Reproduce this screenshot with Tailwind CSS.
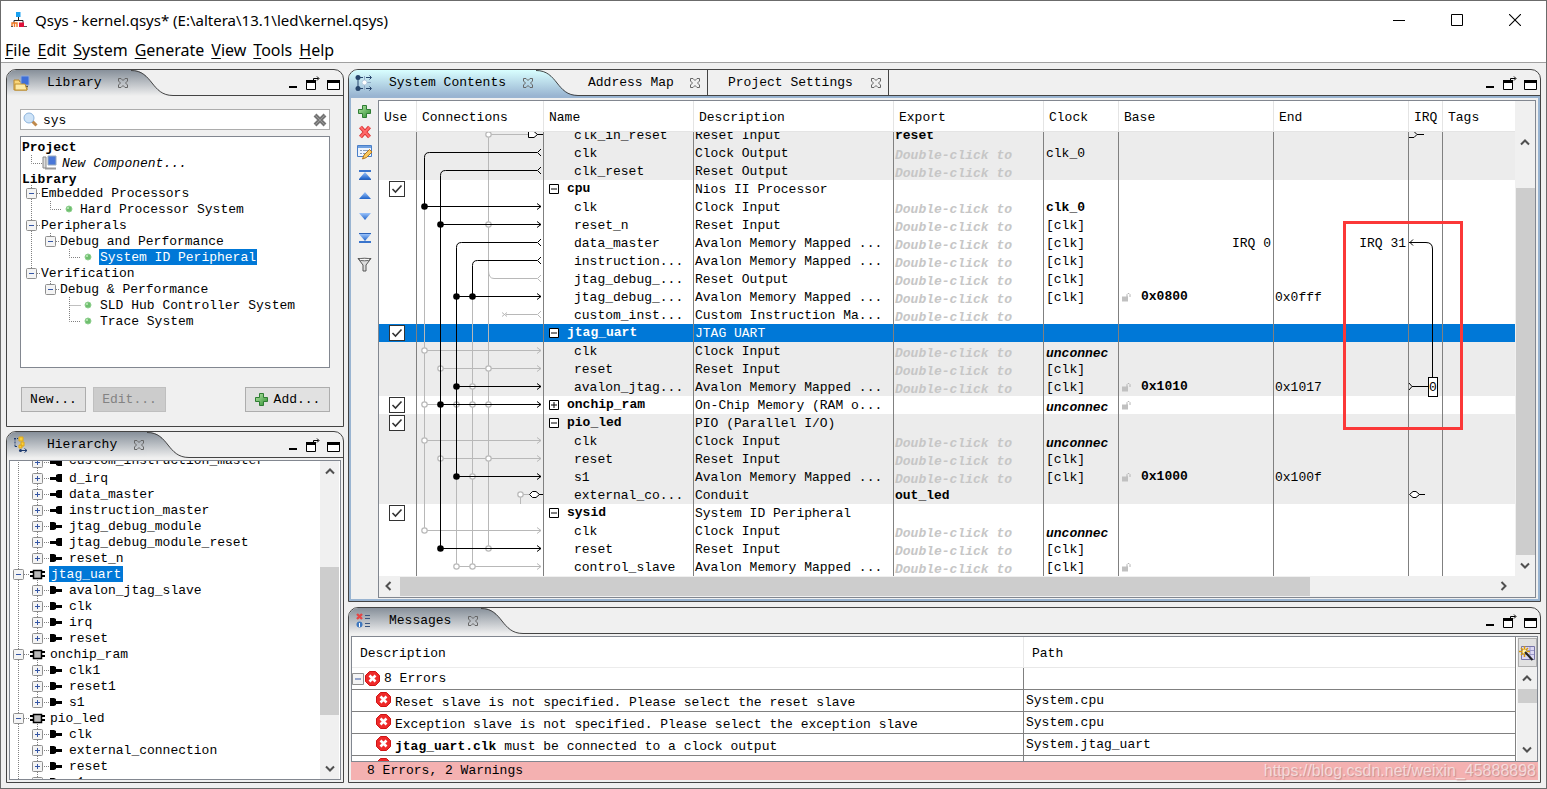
<!DOCTYPE html>
<html lang="en">
<head>
<meta charset="utf-8">
<title>Qsys - kernel.qsys*</title>
<script src="https://cdn.jsdelivr.net/npm/@tailwindcss/browser@4"></script>
</head>
<body class="h-screen overflow-hidden bg-[#f0f0f0] text-black text-[13px] leading-4 font-['Liberation_Mono',monospace]">
<svg class="absolute h-0 w-0" aria-hidden="true">
  <defs>
    <linearGradient id="gGray" x1="0" y1="0" x2="0" y2="1"><stop offset="0" stop-color="#87909a"/><stop offset="1" stop-color="#f0f0f0"/></linearGradient>
    <linearGradient id="gBlue" x1="0" y1="0" x2="0" y2="1"><stop offset="0" stop-color="#d9ffff"/><stop offset="1" stop-color="#99b4d1"/></linearGradient>
    <linearGradient id="gTri" x1="0" y1="0" x2="0" y2="1"><stop offset="0" stop-color="#9cc4fb"/><stop offset="1" stop-color="#1f63c9"/></linearGradient>
    <linearGradient id="gPlus" x1="0" y1="0" x2="1" y2="1"><stop offset="0" stop-color="#b5e6a8"/><stop offset="1" stop-color="#2f8f2f"/></linearGradient>
    <symbol id="close" viewBox="0 0 12 12"><path d="M1.5 1.5H4L6 3.5 8 1.5H10.5V4L8.500 6 10.500 8V10.500H8L6 8.500 4 10.500H1.500V8L3.500 6 1.500 4Z" fill="none" stroke="#666" stroke-width="1"/></symbol>
    <symbol id="plus" viewBox="0 0 13 13"><path d="M4.500 .5H8.500V4.500H12.500V8.500H8.500V12.500H4.500V8.500H.5V4.500H4.500Z" fill="url(#gPlus)" stroke="#2f7d33"/></symbol>
    <symbol id="err" viewBox="0 0 15 15"><path d="M4.500 .5H10.500L14.500 4.500V10.500L10.500 14.500H4.500L.5 10.500V4.500Z" fill="#ee2a2a" stroke="#d01414"/><path d="M4.500 4.500L10.500 10.500M10.500 4.500L4.500 10.500" stroke="#fff" stroke-width="2.600"/></symbol>
    <symbol id="curveGray" viewBox="0 0 42 26"><path d="M0 0C22 0 20 25 42 25V26H0Z" fill="url(#gGray)"/><path d="M0 .5C22 .5 20 25.500 42 25.500" fill="none" stroke="#444"/></symbol>
    <symbol id="curveBlue" viewBox="0 0 42 26"><path d="M0 0C22 0 20 25 42 25V26H0Z" fill="url(#gBlue)"/><path d="M0 .5C22 .5 20 25.500 42 25.500" fill="none" stroke="#444"/></symbol>
    <symbol id="min" viewBox="0 0 10 14"><path d="M1 11H9" stroke="#000" stroke-width="2"/></symbol>
    <symbol id="float" viewBox="0 0 15 14"><path d="M1.500 4.500H10.500V13.500H1.500Z" fill="#fff" stroke="#000"/><path d="M1 5.500H11" stroke="#000" stroke-width="3"/><path d="M8.500 4V2.500H13.500M12 .5L14 2.500L12 4.500" fill="none" stroke="#000"/></symbol>
    <symbol id="max" viewBox="0 0 13 14"><path d="M.5 4.500H12.500V13.500H.5Z" fill="#fff" stroke="#000"/><path d="M0 5.500H13" stroke="#000" stroke-width="3"/></symbol>
    <symbol id="up" viewBox="0 0 10 7"><path d="M1 5.500L5 1.500L9 5.500" fill="none" stroke="#505050" stroke-width="2"/></symbol>
    <symbol id="down" viewBox="0 0 10 7"><path d="M1 1.500L5 5.500L9 1.500" fill="none" stroke="#505050" stroke-width="2"/></symbol>
    <symbol id="left" viewBox="0 0 7 10"><path d="M5.500 1L1.500 5L5.500 9" fill="none" stroke="#505050" stroke-width="2"/></symbol>
    <symbol id="right" viewBox="0 0 7 10"><path d="M1.500 1L5.500 5L1.500 9" fill="none" stroke="#505050" stroke-width="2"/></symbol>
    <symbol id="lock" viewBox="0 0 9 9"><path d="M0 3.500H6V8.500H0Z" fill="#c0c0c0"/><path d="M5 4V1.500L6 .5H7L8 1.500V4" fill="none" stroke="#b4b4b4"/></symbol>
  </defs>
</svg>

<div class="flex h-full flex-col border border-[#6b6b6b]">
  <header class="bg-white font-['Noto_Sans',sans-serif] text-[15px]">
    <div class="flex h-[37px] items-center pr-0.5 pl-2.5">
      <svg class="mr-2 h-4 w-4" viewBox="0 0 16 16" aria-hidden="true"><path d="M5 0H9.500V5H5Z" fill="#1aa0f0"/><path d="M7.500 5V8M3 11V8.500H12V11" fill="none" stroke="#222"/><path d="M1 15V11H6V15M3.500 11V15" fill="none" stroke="#ee7722" stroke-width="1.400"/><path d="M8 10.500H13V15H8Z" fill="#e0103a"/><path d="M0 14.500H2M13 14.500H16" stroke="#555"/></svg>
      <h1 class="flex-1 whitespace-nowrap">Qsys - kernel.qsys* (E:\altera\13.1\led\kernel.qsys)</h1>
      <button class="grid h-full w-[58px] place-items-center" aria-label="Minimize"><svg class="h-3 w-3.5" viewBox="0 0 14 12"><path d="M1 6.500H13" stroke="#000"/></svg></button>
      <button class="grid h-full w-[58px] place-items-center" aria-label="Maximize"><svg class="h-3 w-3" viewBox="0 0 12 12"><path d="M.5 .5H11.500V11.500H.5Z" fill="none" stroke="#000"/></svg></button>
      <button class="grid h-full w-[58px] place-items-center" aria-label="Close"><svg class="h-3 w-3" viewBox="0 0 12 12"><path d="M0 0L12 12M12 0L0 12" stroke="#000" stroke-width="1.100"/></svg></button>
    </div>
    <nav class="flex h-[25px] items-center gap-[7px] border-b border-[#a0a0a0] pl-1 text-base leading-5">
      <button><u class="underline-offset-2">F</u>ile</button>
      <button><u class="underline-offset-2">E</u>dit</button>
      <button><u class="underline-offset-2">S</u>ystem</button>
      <button><u class="underline-offset-2">G</u>enerate</button>
      <button><u class="underline-offset-2">V</u>iew</button>
      <button><u class="underline-offset-2">T</u>ools</button>
      <button><u class="underline-offset-2">H</u>elp</button>
    </nav>
  </header>

  <main class="flex min-h-0 flex-1 gap-1 px-[5px] pt-[6px] pb-[5px]">
    <div class="flex w-[338px] shrink-0 flex-col gap-1">

      <section class="flex h-[358px] shrink-0 flex-col rounded-t-[10px] border border-[#444]">
        <div class="flex h-[26px] shrink-0 overflow-hidden rounded-t-[9px]">
          <div class="flex w-[124px] items-center bg-linear-to-b from-[#87909a] to-[#f0f0f0] pr-0.5 pl-[6px]">
            <svg class="mr-4 h-[18px] w-[18px]" viewBox="0 0 18 18" aria-hidden="true"><path d="M1 6H6L7 8H14V16H1Z" fill="#f9d67a" stroke="#b8862b"/><path d="M8 2H16V11H8Z" fill="#3f6fd8" stroke="#8ea9d8"/><path d="M10 12.500H15" stroke="#555"/><path d="M2 10H12L14 16H2Z" fill="#fde9a6" stroke="#c0902f"/></svg>
            <h2>Library</h2>
            <button class="ml-auto" aria-label="Close Library"><svg class="h-3 w-3"><use href="#close"/></svg></button>
          </div>
          <svg class="h-[26px] w-[42px]" aria-hidden="true"><use href="#curveGray"/></svg>
          <div class="flex flex-1 items-center justify-end gap-[7px] border-b border-[#444] pr-[3px]">
            <button aria-label="Minimize panel"><svg class="h-3.5 w-2.5"><use href="#min"/></svg></button>
            <button aria-label="Detach panel"><svg class="h-3.5 w-[15px]"><use href="#float"/></svg></button>
            <button aria-label="Maximize panel"><svg class="h-3.5 w-[13px]"><use href="#max"/></svg></button>
          </div>
        </div>
        <div class="flex min-h-0 flex-1 flex-col px-[13px] pt-[13px] pb-[14px]">
          <label class="flex h-[21px] items-center border border-[#acacac] bg-white px-0.5">
            <svg class="h-4 w-4" viewBox="0 0 16 16" aria-hidden="true"><path d="M9 9L13.500 13.500" stroke="#c08a4c" stroke-width="3"/><circle cx="6" cy="6" r="5" fill="#cfe4f8" stroke="#8db4dd"/></svg>
            <input type="text" value="sys" aria-label="Search library" class="ml-1 h-[18px] w-0 flex-1 pt-0.5 outline-none">
            <button aria-label="Clear search"><svg class="h-3.5 w-3.5" viewBox="0 0 14 14"><path d="M2 2L12 12M12 2L2 12" stroke="#757575" stroke-width="4"/><path d="M2.500 2.500L11.500 11.500M11.500 2.500L2.500 11.500" stroke="#999"/></svg></button>
          </label>
          <div id="lib" role="tree" class="mt-[6px] min-h-0 flex-1 overflow-hidden border border-[#828790] bg-white pt-0.5 leading-[18px]"></div>
          <div class="mt-[19px] flex h-[25px] shrink-0 gap-[7px] pl-px">
            <button class="w-[65px] border border-[#adadad] bg-[#e1e1e1]">New...</button>
            <button disabled class="w-[73px] border border-[#bfbfbf] bg-[#ccc] text-[#838383]">Edit...</button>
            <button class="ml-auto flex w-[85px] items-center justify-center gap-1.5 border border-[#adadad] bg-[#e1e1e1]"><svg class="h-[13px] w-[13px]"><use href="#plus"/></svg>Add...</button>
          </div>
        </div>
      </section>

      <section class="flex min-h-0 flex-1 flex-col rounded-t-[10px] border border-[#444]">
        <div class="flex h-[26px] shrink-0 overflow-hidden rounded-t-[9px]">
          <div class="flex w-[140px] items-center bg-linear-to-b from-[#87909a] to-[#f0f0f0] pr-0.5 pl-[6px]">
            <svg class="mr-4 h-[18px] w-[18px]" viewBox="0 0 18 18" aria-hidden="true"><path d="M2 2.500V10.500M1 2.500H5M2 10.500H5" fill="none" stroke="#1e3b6f" stroke-dasharray="2 1"/><path d="M6 1H10V5H6ZM8 6H11V10H8ZM6 9H9V12H6Z" fill="#f8cf3c" stroke="#e0a818"/><path d="M7 14.500H14" stroke="#1e3b6f"/><circle cx="7.500" cy="14.500" r="1.500" fill="#1e3b6f"/><path d="M11.500 12.500L14 14.500L11.500 16.500" fill="none" stroke="#1e3b6f"/></svg>
            <h2>Hierarchy</h2>
            <button class="ml-auto" aria-label="Close Hierarchy"><svg class="h-3 w-3"><use href="#close"/></svg></button>
          </div>
          <svg class="h-[26px] w-[42px]" aria-hidden="true"><use href="#curveGray"/></svg>
          <div class="flex flex-1 items-center justify-end gap-[7px] border-b border-[#444] pr-[3px]">
            <button aria-label="Minimize panel"><svg class="h-3.5 w-2.5"><use href="#min"/></svg></button>
            <button aria-label="Detach panel"><svg class="h-3.5 w-[15px]"><use href="#float"/></svg></button>
            <button aria-label="Maximize panel"><svg class="h-3.5 w-[13px]"><use href="#max"/></svg></button>
          </div>
        </div>
        <div class="mx-0.5 mt-0.5 mb-0.5 flex min-h-0 flex-1 border border-[#828790] bg-white">
          <div id="hier" role="tree" class="flex min-h-0 flex-1 flex-col overflow-hidden leading-[18px]"></div>
          <div class="mr-px flex w-[19px] flex-col items-center bg-[#f0f0f0] py-[7px]">
            <svg class="h-[7px] w-2.5 shrink-0"><use href="#up"/></svg>
            <div class="mt-[92px] h-[148px] w-full bg-[#cdcdcd]"></div>
            <svg class="mt-auto h-[7px] w-2.5 shrink-0"><use href="#down"/></svg>
          </div>
        </div>
      </section>
    </div>

    <div class="flex min-w-0 flex-1 flex-col gap-[5px]">
      <section class="flex min-h-0 flex-1 flex-col rounded-t-[10px] border border-[#444]">
        <div class="flex h-[26px] shrink-0 overflow-hidden rounded-t-[9px]">
          <div class="flex w-[187px] items-center bg-linear-to-b from-[#d9ffff] to-[#99b4d1] pr-0.5 pl-[6px]">
            <svg class="mr-4 h-[18px] w-[18px] shrink-0" viewBox="0 0 18 18" aria-hidden="true"><path d="M3 3V15M3 3.500H8M3 14.500H8M11 3.500H16M11 14.500H16" stroke="#27456b"/><path d="M9.500 2V16M9 8.500H16" stroke="#8fa9c4"/><circle cx="3" cy="3.500" r="2.500" fill="#27456b"/><circle cx="3" cy="14.500" r="2.500" fill="#27456b"/><circle cx="9.500" cy="8.500" r="2.500" fill="#fff" stroke="#b5cbe0"/><path d="M14.500 1.500L16.500 3.500L14.500 5.500M14.500 12.500L16.500 14.500L14.500 16.500" fill="none" stroke="#27456b"/></svg>
            <h2 class="whitespace-nowrap">System Contents</h2>
            <button class="ml-auto" aria-label="Close System Contents"><svg class="h-3 w-3"><use href="#close"/></svg></button>
          </div>
          <svg class="h-[26px] w-[42px]" aria-hidden="true"><use href="#curveBlue"/></svg>
          <div class="flex w-[130px] items-center border-r border-b border-[#444] pr-1.5 pl-2.5">
            <h2 class="whitespace-nowrap">Address Map</h2>
            <button class="ml-auto" aria-label="Close Address Map"><svg class="h-3 w-3"><use href="#close"/></svg></button>
          </div>
          <div class="flex w-[181px] items-center border-r border-b border-[#444] pr-1.5 pl-5">
            <h2 class="whitespace-nowrap">Project Settings</h2>
            <button class="ml-auto" aria-label="Close Project Settings"><svg class="h-3 w-3"><use href="#close"/></svg></button>
          </div>
          <div class="flex flex-1 items-center justify-end gap-[7px] border-b border-[#444] pr-[3px]">
            <button aria-label="Minimize panel"><svg class="h-3.5 w-2.5"><use href="#min"/></svg></button>
            <button aria-label="Detach panel"><svg class="h-3.5 w-[15px]"><use href="#float"/></svg></button>
            <button aria-label="Maximize panel"><svg class="h-3.5 w-[13px]"><use href="#max"/></svg></button>
          </div>
        </div>
        <div class="flex min-h-0 flex-1 border-2 border-[#99b4d1] pt-[2px] pr-[2px] pb-px">
          <div class="flex w-[27px] shrink-0 flex-col items-center gap-[9px] pt-[5px]" role="toolbar">
            <button aria-label="Add"><svg class="h-[13px] w-[13px]"><use href="#plus"/></svg></button>
            <button class="-mt-0.5" aria-label="Remove"><svg class="h-3.5 w-3.5" viewBox="0 0 14 14"><path d="M2.500 2L11.500 12M11.500 2L2.500 12" stroke="#d93131" stroke-width="4"/><path d="M2.500 2L11.500 12M11.500 2L2.500 12" stroke="#ff6a6a" stroke-width="2"/></svg></button>
            <button class="-mt-1" aria-label="Edit"><svg class="h-4 w-4" viewBox="0 0 16 16"><path d="M.5 1.500H14.500V12.500H.5Z" fill="#eef4fd" stroke="#4a7fc8"/><path d="M1 3H14" stroke="#6fa0e0" stroke-width="2"/><path d="M3 6.500H5M3 9.500H5M6 6.500H11M6 9.500H9" stroke="#8a9bb5"/><path d="M5.500 15L7 11L12.500 5.500L15 8L9.500 13.500Z" fill="#f7c860" stroke="#b5761c"/></svg></button>
            <button aria-label="Move to top"><svg class="h-3 w-3.5" viewBox="0 0 14 12"><path d="M1 2H13" stroke="#3a74cc" stroke-width="2"/><path d="M7 3L13 10H1Z" fill="url(#gTri)"/><path d="M1 10.500H13" stroke="#2b62b8"/></svg></button>
            <button aria-label="Move up"><svg class="h-3 w-3.5" viewBox="0 0 14 12"><path d="M7 2L13 9H1Z" fill="url(#gTri)"/></svg></button>
            <button aria-label="Move down"><svg class="h-3 w-3.5" viewBox="0 0 14 12"><path d="M7 9L13 2H1Z" fill="url(#gTri)"/></svg></button>
            <button aria-label="Move to bottom"><svg class="h-3 w-3.5" viewBox="0 0 14 12"><path d="M1 1.500H13" stroke="#2b62b8"/><path d="M7 9L13 2H1Z" fill="url(#gTri)"/><path d="M1 10H13" stroke="#3a74cc" stroke-width="2"/></svg></button>
            <button class="mt-1" aria-label="Filter"><svg class="h-[15px] w-[15px]" viewBox="0 0 15 15"><path d="M1 1.500H14L9 8V14H6V8Z" fill="#ddd" stroke="#555"/><ellipse cx="7.500" cy="2.500" rx="5.500" ry="1.300" fill="#f6f6f6" stroke="#666"/></svg></button>
          </div>
          <div class="flex min-w-0 flex-1 flex-col border border-[#828790]">
            <div class="flex min-h-0 flex-1">
              <div class="relative min-w-0 flex-1 overflow-hidden bg-white">
                <table class="w-full table-fixed border-separate border-spacing-0 whitespace-nowrap">
                  <colgroup><col class="w-[37px]"><col class="w-[127px]"><col class="w-[150px]"><col class="w-[200px]"><col class="w-[150px]"><col class="w-[75px]"><col class="w-[155px]"><col class="w-[135px]"><col class="w-[34px]"><col></colgroup>
                  <thead><tr id="head"></tr></thead>
                  <tbody id="rows"></tbody>
                </table>
                <svg id="wires" class="absolute top-[31px] left-[37px] h-[444px] w-[127px]" viewBox="416 132 127 444" fill="none" aria-hidden="true"></svg>
                <svg class="absolute top-[31px] left-[1029px] h-[444px] w-[35px]" viewBox="1408 132 35 444" fill="none" stroke="#000" aria-hidden="true">
                  <path d="M1409 137.500H1414L1417 134.500L1414 131.500M1417 134.500H1424"/>
                  <path d="M1409 242.500H1426Q1432.500 242.500 1432.500 249V378M1413 239.500L1410 242.500L1413 245.500"/>
                  <path d="M1409 383L1412 386.500L1409 390M1412 386.500H1428"/>
                  <rect x="1428.500" y="377.500" width="9" height="19" fill="#fff"/>
                  <text x="1429" y="391" fill="#000" stroke="none" class="text-[13px]">0</text>
                  <path d="M1409.500 494.500L1413 491.500H1416L1419.500 494.500L1416 497.500H1413ZM1419 494.500H1425" fill="#fff"/>
                </svg>
                <div class="absolute top-[120px] left-[964px] h-[209px] w-[120px] border-3 border-[#fb3838]"></div>
              </div>
              <div class="flex w-5 shrink-0 flex-col items-center pt-[38px] pb-[7px]">
                <svg class="h-[7px] w-2.5 shrink-0"><use href="#up"/></svg>
                <div class="mt-[42px] mb-[7px] min-h-0 w-[19px] flex-1 bg-[#cdcdcd]"></div>
                <svg class="h-[7px] w-2.5 shrink-0"><use href="#down"/></svg>
              </div>
            </div>
            <div class="mb-px flex h-[20px] shrink-0 items-center pr-7 pl-1.5">
              <svg class="h-2.5 w-[7px]"><use href="#left"/></svg>
              <div class="mr-[190px] ml-2 h-[19px] flex-1 bg-[#cdcdcd]"></div>
              <svg class="h-2.5 w-[7px]"><use href="#right"/></svg>
            </div>
          </div>
        </div>
      </section>

      <section class="flex h-[176px] shrink-0 flex-col rounded-t-[10px] border border-[#444]">
        <div class="flex h-[26px] shrink-0 overflow-hidden rounded-t-[9px]">
          <div class="flex w-[132px] items-center bg-linear-to-b from-[#87909a] to-[#f0f0f0] pr-0.5 pl-[6px]">
            <svg class="mr-4 h-[18px] w-[18px]" viewBox="0 0 18 18" aria-hidden="true"><path d="M2 2L7 7M7 2L2 7" stroke="#e64545" stroke-width="2.400"/><circle cx="4.500" cy="12.500" r="3" fill="#3f78bf"/><path d="M4.500 11V15" stroke="#fff"/><path d="M10 3.500H15M10 6.500H15M10 11.500H15M10 14.500H15" stroke="#3a557e"/></svg>
            <h2>Messages</h2>
            <button class="ml-auto" aria-label="Close Messages"><svg class="h-3 w-3"><use href="#close"/></svg></button>
          </div>
          <svg class="h-[26px] w-[42px]" aria-hidden="true"><use href="#curveGray"/></svg>
          <div class="flex flex-1 items-center justify-end gap-[7px] border-b border-[#444] pr-[3px]">
            <button aria-label="Minimize panel"><svg class="h-3.5 w-2.5"><use href="#min"/></svg></button>
            <button aria-label="Detach panel"><svg class="h-3.5 w-[15px]"><use href="#float"/></svg></button>
            <button aria-label="Maximize panel"><svg class="h-3.5 w-[13px]"><use href="#max"/></svg></button>
          </div>
        </div>
        <div class="mx-0.5 mt-0.5 mb-[2px] flex min-h-0 flex-1 flex-col">
          <div class="flex min-h-0 flex-1 border border-[#828790] bg-white">
            <div class="min-w-0 flex-1 overflow-hidden">
              <table class="w-full table-fixed border-separate border-spacing-0 border-r border-[#828282] whitespace-nowrap">
                <colgroup><col class="w-[671px]"><col></colgroup>
                <thead><tr><th class="h-[31px] border-b border-[#ececec] pt-1 pl-2 text-left font-normal">Description</th><th class="border-b border-l border-[#e8e8e8] pt-1 pl-2 text-left font-normal">Path</th></tr></thead>
                <tbody id="msgs"></tbody>
              </table>
            </div>
            <div class="ml-px flex w-5 flex-col items-center bg-[#f0f0f0] pt-px pb-2">
              <button class="grid h-[29px] w-[19px] shrink-0 place-items-center border border-[#adadad] bg-[#e1e1e1]" aria-label="Table settings"><svg class="h-4 w-4" viewBox="0 0 16 16"><path d="M2.500 1.500H15.500V14.500H2.500Z" fill="#dcd8f4" stroke="#7876a8"/><path d="M3 5.500H15M3 9.500H15M11 2V14" stroke="#9a98c8"/><path d="M5.500 1V12M0 6.500H11M2 3L9 10M9 3L2 10" stroke="#d99a08" stroke-width="1.500"/><circle cx="5.500" cy="6.500" r="2" fill="#fff4b0"/><path d="M6 7L13.500 15" stroke="#222" stroke-width="2"/></svg></button>
              <svg class="mt-2 h-[7px] w-2.5 shrink-0"><use href="#up"/></svg>
              <div class="mt-[7px] h-3.5 w-[19px] bg-[#cdcdcd]"></div>
              <svg class="mt-auto h-[7px] w-2.5 shrink-0"><use href="#down"/></svg>
            </div>
          </div>
          <footer class="flex h-[18px] shrink-0 items-center justify-between bg-[#f4b1b1] pl-4 leading-[18px]">
            <span>8 Errors, 2 Warnings</span>
            <span class="pr-0.5 font-['Liberation_Sans',sans-serif] text-base text-white/60 [text-shadow:1px_1px_1px_#c89090]">https://blog.csdn.net/weixin_45888898</span>
          </footer>
        </div>
      </section>
    </div>
  </main>
</div>

<script>
const $ = id => document.getElementById(id);

/* Expander box centred on (x, 8) */
const box = (x, plus) => `<rect x="${x - 4.5}" y="3.500" width="10" height="10" rx="1" fill="#f4f4f4" stroke="#8f8f8f"/><path d="M${x - 2} 8.500H${x + 3}${plus ? `M${x + .5} 6V11` : ''}" stroke="#3556a5"/>`;
const dots = d => `<path d="${d}" fill="none" stroke="#808080" stroke-dasharray="1 1"/>`;
const gutter = (w, inner) => `<svg class="h-4 shrink-0" width="${w}" height="16" aria-hidden="true">${inner}</svg>`;
const bullet = x => `<circle cx="${x}" cy="8" r="3" fill="#6fbf6f" stroke="#8fcf8f"/><circle cx="${x - 1}" cy="7" r="1" fill="#c5ecc0"/>`;

/* Library tree: gutter width, gutter drawing, text, style */
const computer = '<path d="M22 2H25V13H22Z" fill="#ddd" stroke="#888"/><path d="M27 1H35V10H27Z" fill="#4a78d8" stroke="#9ab"/><path d="M24 13.500H35" stroke="#999" stroke-width="2"/>';
const lib = [
  [1, '', 'Project', 'b'],
  [41, dots('M10.500 0V8.500H21') + computer, 'New Component...', 'i'],
  [1, '', 'Library', 'c'],
  [20, dots('M10.500 0V16M16 8.500H20') + box(10), 'Embedded Processors'],
  [59, dots('M10.500 0V16M29.500 0V8.500H40') + bullet(48), 'Hard Processor System'],
  [20, dots('M10.500 0V16M16 8.500H20') + box(10), 'Peripherals'],
  [39, dots('M10.500 0V16M29.500 0V8M35 8.500H39') + box(29), 'Debug and Performance'],
  [78, dots('M10.500 0V16M48.500 0V8.500H60') + bullet(67), 'System ID Peripheral', 's'],
  [20, dots('M10.500 0V8M16 8.500H20') + box(10), 'Verification'],
  [39, dots('M29.500 0V8M35 8.500H39') + box(29), 'Debug & Performance'],
  [79, dots('M48.500 0V16M48.500 8.500H60') + bullet(67), 'SLD Hub Controller System'],
  [79, dots('M48.500 0V8.500H60') + bullet(67), 'Trace System'],
];
$('lib').innerHTML = lib.map(([w, g, t, s]) => {
  t = t.replace('&', '&amp;');
  const row = s === 'c' ? 'flex h-3.5' : 'flex h-4';
  const cls = s === 's' ? 'bg-[#0078d7] px-px text-white' : s === 'i' ? 'italic' : s ? 'font-bold' : '';
  return `<div role="treeitem" class="${row}">${gutter(w, g)}<span class="${cls}">${t}</span></div>`;
}).join('');

/* Hierarchy tree: m = master, s = slave, C = component, X = selected component */
const hier = 'm custom_instruction_master|m d_irq|m data_master|m instruction_master|s jtag_debug_module|m jtag_debug_module_reset|s reset_n|X jtag_uart|s avalon_jtag_slave|s clk|s irq|s reset|C onchip_ram|s clk1|s reset1|s s1|C pio_led|s clk|s external_connection|s reset|s s1'.split('|').map(r => r.split(' '));
$('hier').innerHTML = hier.map(([k, t], i) => {
  const comp = k === 'C' || k === 'X';
  const next = hier[i + 1], last = !comp && next && (next[0] === 'C' || next[0] === 'X');
  const g = comp
    ? gutter(k === 'X' ? 39 : 40, dots('M8.500 0V16M14 8.500H20M27.500 12V16') + box(8) + '<path d="M20 6H35M20 10H35" stroke="#000" stroke-width="2"/><rect x="23.500" y="4.500" width="8" height="8" fill="#b8b8b8" stroke="#000" stroke-width="1.500"/>')
    : gutter(59, dots(`M8.500 0V16M27.500 0V${last ? 8 : 16}M34 8.500H39`) + box(27, true) + (k === 'm'
      ? '<path d="M40 8.500H47" stroke="#000" stroke-width="3"/><path d="M46 5L48 4H52V12H48L46 11Z" fill="#000"/>'
      : '<path d="M40 4H44L46 5V11L44 12H40Z" fill="#000"/><path d="M45 8.500H52" stroke="#000" stroke-width="3"/>'));
  const row = i ? 'flex h-4 shrink-0' : 'flex h-[9px] shrink-0 items-end overflow-hidden';
  return `<div role="treeitem" class="${row}">${g}<span class="${k === 'X' ? 'bg-[#0078d7] px-0.5 text-white' : ''}">${t}</span></div>`;
}).join('');

/* System contents table */
$('head').innerHTML = ['Use', 'Connections', 'Name', 'Description', 'Export', 'Clock', 'Base', 'End', 'IRQ', 'Tags'].map((h, i) =>
  `<th class="${i ? 'h-[31px] border-b border-l border-[#e4e4e4] pt-[3px] pl-[5px] text-left font-normal' : 'h-[31px] border-b border-[#e4e4e4] pt-[3px] pl-[5px] text-left font-normal'}">${h}</th>`).join('');
const D = 'Double-click to', U = '*unconnec', K = '[clk]', AM = 'Avalon Memory Mapped ...';
/* shade, name, description, export, clock, base, end ; names with +/- are components */
const rows = [
  [1, 'clk_in_reset', 'Reset Input', '!reset'],
  [1, 'clk', 'Clock Output', D, 'clk_0'],
  [1, 'clk_reset', 'Reset Output', D],
  [0, '-cpu', 'Nios II Processor'],
  [0, 'clk', 'Clock Input', D, '!clk_0'],
  [0, 'reset_n', 'Reset Input', D, K],
  [0, 'data_master', AM, D, K, '>IRQ 0', '>IRQ 31'],
  [0, 'instruction...', AM, D, K],
  [0, 'jtag_debug_...', 'Reset Output', D, K],
  [0, 'jtag_debug_...', AM, D, K, '0x0800', '0x0fff'],
  [0, 'custom_inst...', 'Custom Instruction Ma...', D],
  [2, '-jtag_uart', 'JTAG UART'],
  [1, 'clk', 'Clock Input', D, U],
  [1, 'reset', 'Reset Input', D, K],
  [1, 'avalon_jtag...', AM, D, K, '0x1010', '0x1017'],
  [0, '+onchip_ram', 'On-Chip Memory (RAM o...', '', U, ' '],
  [1, '-pio_led', 'PIO (Parallel I/O)'],
  [1, 'clk', 'Clock Input', D, U],
  [1, 'reset', 'Reset Input', D, K],
  [1, 's1', AM, D, K, '0x1000', '0x100f'],
  [1, 'external_co...', 'Conduit', '!out_led'],
  [0, '-sysid', 'System ID Peripheral'],
  [0, 'clk', 'Clock Input', D, U],
  [0, 'reset', 'Reset Input', D, K],
  [0, 'control_slave', AM, D, K, ' '],
];
const shade = ['bg-white', 'bg-[#ececec]', 'bg-[#0078d7] text-white'];
$('rows').innerHTML = rows.map(([s, name, desc, ex = '', ck = '', base = '', end = ''], i) => {
  const top = /^[-+]/.test(name);
  const td = (inner, c = 'h-[18px] leading-5 pl-0.5') =>
    `<td class="border-l border-[#808080] p-0"><div class="${i ? 'overflow-hidden' : 'flex h-3 items-end overflow-hidden'}"><div class="${c}">${inner}</div></div></td>`;
  const use = top
    ? `<label class="relative ml-2.5 grid h-[18px] w-4 place-items-center"><input type="checkbox" checked aria-label="Use ${name.slice(1)}" class="col-start-1 row-start-1 h-4 w-4 appearance-none border border-[#333] bg-white"><svg class="pointer-events-none col-start-1 row-start-1 h-4 w-4" viewBox="0 0 16 16"><path d="M3.500 8L6.500 11L12.500 4.500" fill="none" stroke="#333" stroke-width="1.600"/></svg></label>` : '';
  const nm = top
    ? `<svg class="h-2.5 w-2.5" viewBox="0 0 10 10"><path d="M.5 .5H9.500V9.500H.5Z" fill="#fff" stroke="#000"/><path d="M2 5H8${name[0] === '+' ? 'M5 2V8' : ''}" stroke="#000"/></svg><b>${name.slice(1)}</b>` : name;
  const b = base[0] === '>' ? base.slice(1) : base ? `<svg class="h-[9px] w-[9px]"><use href="#lock"/></svg><b>${base}</b>` : '';
  return `<tr class="${shade[s]}"><td class="p-0">${use}</td>` + td('') +
    td(nm, top ? 'flex h-[18px] items-center gap-2 pl-[5px] leading-5' : 'h-[18px] pl-[30px] leading-5') +
    td(desc, 'h-[18px] pl-px leading-5') +
    td(ex === D ? ex : ex.slice(1), ex === D ? 'h-[18px] pl-px font-bold italic leading-6 text-[#c6c6c6]' : 'h-[18px] pl-px font-bold leading-5') +
    td(/^[*!]/.test(ck) ? ck.slice(1) : ck, ck[0] === '*' ? 'h-[18px] pl-0.5 font-bold italic leading-6' : ck[0] === '!' ? 'h-[18px] pl-0.5 font-bold leading-5' : 'h-[18px] pl-0.5 leading-5') +
    td(b, base[0] === '>' ? 'h-[18px] pr-0.5 text-right leading-5' : 'flex h-[18px] items-center gap-2.5 pl-[3px] leading-5') +
    td(end[0] === '>' ? end.slice(1) : end, end[0] === '>' ? 'h-[18px] pr-0.5 text-right leading-5' : 'h-[18px] pl-px leading-5') +
    td('') + td('') + '</tr>';
}).join('');

/* Connection wires; y(i) is the wire height of row i */
const G = '#b8b8b8', B = '#000', y = i => 134.5 + 18 * i;
const line = (c, d) => `<path d="${d}" stroke="${c}"/>`;
const arrow = (c, x, i) => line(c, `M${x} ${y(i)}H541M537 ${y(i) - 3}L541 ${y(i)}L537 ${y(i) + 3}`);
const tail = (c, x, i) => line(c, `M${x} ${y(i)}H537M541 ${y(i) - 3.5}L537.5 ${y(i)}L541 ${y(i) + 3.5}`);
const ring = (x, i, f = '#fff') => `<circle cx="${x}" cy="${y(i)}" r="2.700" fill="${f}" stroke="${G}" stroke-width="1.200"/>`;
const dot = (x, i) => `<circle cx="${x}" cy="${y(i)}" r="3.300" fill="#000"/>`;
const start = (x, i, end) => line(B, `M${x} ${y(end)}V${y(i) + 5}Q${x} ${y(i)} ${x + 5} ${y(i)}H536`) + tail(B, 530, i);
$('wires').innerHTML = [
  line(G, `M424.5 ${y(4)}V${y(22)}`), line(G, `M456.5 ${y(19)}V${y(24)}`), line(G, `M472.5 ${y(9)}V${y(24)}`), line(G, `M488.5 ${y(0)}V${y(23)}`),
  line(G, `M488.5 ${y(0)}H529M488.5 ${y(8) - 8}Q488.5 ${y(8)} 494 ${y(8)}H530`), tail(G, 494, 8),
  tail(G, 506, 10), line(G, `M502 ${y(10) - 2}L507 ${y(10) + 2}M507 ${y(10) - 2}L502 ${y(10) + 2}`),
  arrow(G, 424.5, 12), arrow(G, 440.5, 13), line(G, `M424.5 ${y(15)}H440.5`), arrow(G, 424.5, 17), arrow(G, 440.5, 18), arrow(G, 424.5, 22), arrow(G, 456.5, 24),
  line(G, `M530 ${y(20)}H520.5V504`),
  ...[[424.5, 12], [488.5, 13], [424.5, 15], [424.5, 17], [488.5, 18], [520.5, 20], [424.5, 22], [456.5, 24], [472.5, 24], [488.5, 0], [440.5, 13], [440.5, 18], [488.5, 5], [472.5, 14], [456.5, 15], [472.5, 15], [488.5, 15], [472.5, 19], [488.5, 23]].map(p => ring(...p)),
  start(424.5, 1, 4), start(440.5, 2, 23), start(456.5, 6, 19), start(472.5, 7, 9),
  arrow(B, 424.5, 4), arrow(B, 440.5, 5), arrow(B, 456.5, 9), arrow(B, 456.5, 14), arrow(B, 440.5, 15), arrow(B, 456.5, 19), arrow(B, 440.5, 23),
  dot(424.5, 4), dot(440.5, 5), dot(456.5, 9), dot(472.5, 9), dot(456.5, 14), dot(440.5, 15), dot(456.5, 19), dot(440.5, 23),
  '<path d="M528.500 131.500H534L537.500 134.500L534 137.500H528.500ZM537 134.500H543" fill="#fff" stroke="#000"/>',
  '<path d="M529.500 494.500L532.500 491.500H536L539.500 494.500L536 497.500H532.500ZM539 494.500H543" fill="#fff" stroke="#000"/>',
].join('');

/* Messages */
const msgs = [
  ['Reset slave is not specified. Please select the reset slave', 'System.cpu'],
  ['Exception slave is not specified. Please select the exception slave', 'System.cpu'],
  ['<b>jtag_uart.clk</b> must be connected to a clock output', 'System.jtag_uart'],
  ['', ''],
];
const icon = '<svg class="h-[15px] w-[15px] shrink-0"><use href="#err"/></svg>';
$('msgs').innerHTML =
  `<tr><td class="border-b border-[#808080] p-0"><div class="flex h-[21px] items-center"><svg class="mr-px h-3 w-3" viewBox="0 0 12 12"><path d="M.5 .5H11.500V11.500H.5Z" fill="#f4f4f4" stroke="#8f8f8f"/><path d="M3 6H9" stroke="#3556a5"/></svg>${icon}<span class="ml-1">8 Errors</span></div></td><td class="border-b border-l border-[#808080] p-0"></td></tr>` +
  msgs.map(([m, p]) => `<tr><td class="border-b border-[#808080] p-0"><div class="flex h-[21px] pt-0.5 pl-6">${icon}<span class="ml-1 leading-[22px]">${m}</span></div></td><td class="border-b border-l border-[#808080] py-0 pl-0.5 leading-[21px]">${p}</td></tr>`).join('');
</script>
</body>
</html>
